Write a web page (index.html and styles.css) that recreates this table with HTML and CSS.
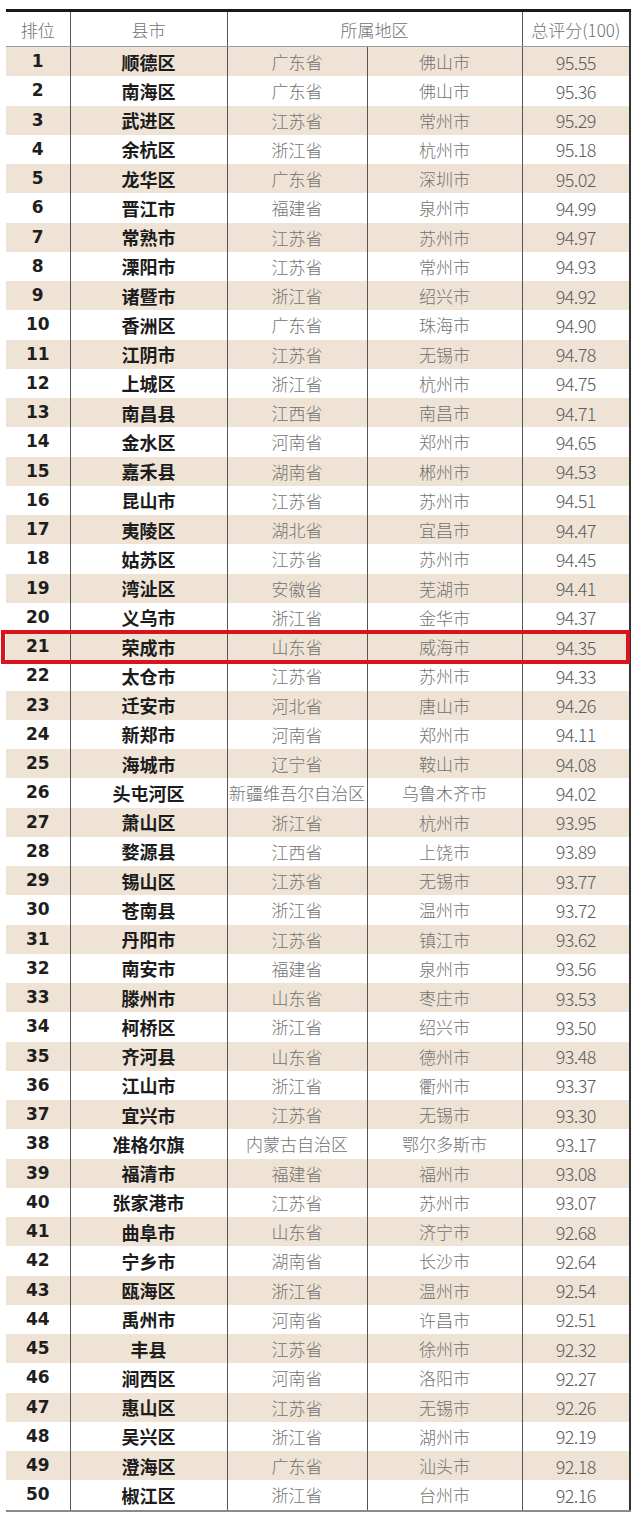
FILE: index.html
```html
<!DOCTYPE html>
<html lang="zh-CN">
<head>
<meta charset="utf-8">
<title>县市排名</title>
<link rel="stylesheet" href="styles.css">
</head>
<body>
<div class="wrap">
<table class="rank-table">
<colgroup>
<col class="c-rank"><col class="c-name"><col class="c-prov"><col class="c-city"><col class="c-score">
</colgroup>
<thead>
<tr><th>排位</th><th>县市</th><th colspan="2">所属地区</th><th>总评分(100)</th></tr>
</thead>
<tbody>
<tr><td class="r">1</td><td class="n">顺德区</td><td class="p">广东省</td><td class="p">佛山市</td><td class="s">95.55</td></tr>
<tr><td class="r">2</td><td class="n">南海区</td><td class="p">广东省</td><td class="p">佛山市</td><td class="s">95.36</td></tr>
<tr><td class="r">3</td><td class="n">武进区</td><td class="p">江苏省</td><td class="p">常州市</td><td class="s">95.29</td></tr>
<tr><td class="r">4</td><td class="n">余杭区</td><td class="p">浙江省</td><td class="p">杭州市</td><td class="s">95.18</td></tr>
<tr><td class="r">5</td><td class="n">龙华区</td><td class="p">广东省</td><td class="p">深圳市</td><td class="s">95.02</td></tr>
<tr><td class="r">6</td><td class="n">晋江市</td><td class="p">福建省</td><td class="p">泉州市</td><td class="s">94.99</td></tr>
<tr><td class="r">7</td><td class="n">常熟市</td><td class="p">江苏省</td><td class="p">苏州市</td><td class="s">94.97</td></tr>
<tr><td class="r">8</td><td class="n">溧阳市</td><td class="p">江苏省</td><td class="p">常州市</td><td class="s">94.93</td></tr>
<tr><td class="r">9</td><td class="n">诸暨市</td><td class="p">浙江省</td><td class="p">绍兴市</td><td class="s">94.92</td></tr>
<tr><td class="r">10</td><td class="n">香洲区</td><td class="p">广东省</td><td class="p">珠海市</td><td class="s">94.90</td></tr>
<tr><td class="r">11</td><td class="n">江阴市</td><td class="p">江苏省</td><td class="p">无锡市</td><td class="s">94.78</td></tr>
<tr><td class="r">12</td><td class="n">上城区</td><td class="p">浙江省</td><td class="p">杭州市</td><td class="s">94.75</td></tr>
<tr><td class="r">13</td><td class="n">南昌县</td><td class="p">江西省</td><td class="p">南昌市</td><td class="s">94.71</td></tr>
<tr><td class="r">14</td><td class="n">金水区</td><td class="p">河南省</td><td class="p">郑州市</td><td class="s">94.65</td></tr>
<tr><td class="r">15</td><td class="n">嘉禾县</td><td class="p">湖南省</td><td class="p">郴州市</td><td class="s">94.53</td></tr>
<tr><td class="r">16</td><td class="n">昆山市</td><td class="p">江苏省</td><td class="p">苏州市</td><td class="s">94.51</td></tr>
<tr><td class="r">17</td><td class="n">夷陵区</td><td class="p">湖北省</td><td class="p">宜昌市</td><td class="s">94.47</td></tr>
<tr><td class="r">18</td><td class="n">姑苏区</td><td class="p">江苏省</td><td class="p">苏州市</td><td class="s">94.45</td></tr>
<tr><td class="r">19</td><td class="n">湾沚区</td><td class="p">安徽省</td><td class="p">芜湖市</td><td class="s">94.41</td></tr>
<tr><td class="r">20</td><td class="n">义乌市</td><td class="p">浙江省</td><td class="p">金华市</td><td class="s">94.37</td></tr>
<tr><td class="r">21</td><td class="n">荣成市</td><td class="p">山东省</td><td class="p">威海市</td><td class="s">94.35</td></tr>
<tr><td class="r">22</td><td class="n">太仓市</td><td class="p">江苏省</td><td class="p">苏州市</td><td class="s">94.33</td></tr>
<tr><td class="r">23</td><td class="n">迁安市</td><td class="p">河北省</td><td class="p">唐山市</td><td class="s">94.26</td></tr>
<tr><td class="r">24</td><td class="n">新郑市</td><td class="p">河南省</td><td class="p">郑州市</td><td class="s">94.11</td></tr>
<tr><td class="r">25</td><td class="n">海城市</td><td class="p">辽宁省</td><td class="p">鞍山市</td><td class="s">94.08</td></tr>
<tr><td class="r">26</td><td class="n">头屯河区</td><td class="p">新疆维吾尔自治区</td><td class="p">乌鲁木齐市</td><td class="s">94.02</td></tr>
<tr><td class="r">27</td><td class="n">萧山区</td><td class="p">浙江省</td><td class="p">杭州市</td><td class="s">93.95</td></tr>
<tr><td class="r">28</td><td class="n">婺源县</td><td class="p">江西省</td><td class="p">上饶市</td><td class="s">93.89</td></tr>
<tr><td class="r">29</td><td class="n">锡山区</td><td class="p">江苏省</td><td class="p">无锡市</td><td class="s">93.77</td></tr>
<tr><td class="r">30</td><td class="n">苍南县</td><td class="p">浙江省</td><td class="p">温州市</td><td class="s">93.72</td></tr>
<tr><td class="r">31</td><td class="n">丹阳市</td><td class="p">江苏省</td><td class="p">镇江市</td><td class="s">93.62</td></tr>
<tr><td class="r">32</td><td class="n">南安市</td><td class="p">福建省</td><td class="p">泉州市</td><td class="s">93.56</td></tr>
<tr><td class="r">33</td><td class="n">滕州市</td><td class="p">山东省</td><td class="p">枣庄市</td><td class="s">93.53</td></tr>
<tr><td class="r">34</td><td class="n">柯桥区</td><td class="p">浙江省</td><td class="p">绍兴市</td><td class="s">93.50</td></tr>
<tr><td class="r">35</td><td class="n">齐河县</td><td class="p">山东省</td><td class="p">德州市</td><td class="s">93.48</td></tr>
<tr><td class="r">36</td><td class="n">江山市</td><td class="p">浙江省</td><td class="p">衢州市</td><td class="s">93.37</td></tr>
<tr><td class="r">37</td><td class="n">宜兴市</td><td class="p">江苏省</td><td class="p">无锡市</td><td class="s">93.30</td></tr>
<tr><td class="r">38</td><td class="n">准格尔旗</td><td class="p">内蒙古自治区</td><td class="p">鄂尔多斯市</td><td class="s">93.17</td></tr>
<tr><td class="r">39</td><td class="n">福清市</td><td class="p">福建省</td><td class="p">福州市</td><td class="s">93.08</td></tr>
<tr><td class="r">40</td><td class="n">张家港市</td><td class="p">江苏省</td><td class="p">苏州市</td><td class="s">93.07</td></tr>
<tr><td class="r">41</td><td class="n">曲阜市</td><td class="p">山东省</td><td class="p">济宁市</td><td class="s">92.68</td></tr>
<tr><td class="r">42</td><td class="n">宁乡市</td><td class="p">湖南省</td><td class="p">长沙市</td><td class="s">92.64</td></tr>
<tr><td class="r">43</td><td class="n">瓯海区</td><td class="p">浙江省</td><td class="p">温州市</td><td class="s">92.54</td></tr>
<tr><td class="r">44</td><td class="n">禹州市</td><td class="p">河南省</td><td class="p">许昌市</td><td class="s">92.51</td></tr>
<tr><td class="r">45</td><td class="n">丰县</td><td class="p">江苏省</td><td class="p">徐州市</td><td class="s">92.32</td></tr>
<tr><td class="r">46</td><td class="n">涧西区</td><td class="p">河南省</td><td class="p">洛阳市</td><td class="s">92.27</td></tr>
<tr><td class="r">47</td><td class="n">惠山区</td><td class="p">江苏省</td><td class="p">无锡市</td><td class="s">92.26</td></tr>
<tr><td class="r">48</td><td class="n">吴兴区</td><td class="p">浙江省</td><td class="p">湖州市</td><td class="s">92.19</td></tr>
<tr><td class="r">49</td><td class="n">澄海区</td><td class="p">广东省</td><td class="p">汕头市</td><td class="s">92.18</td></tr>
<tr><td class="r">50</td><td class="n">椒江区</td><td class="p">浙江省</td><td class="p">台州市</td><td class="s">92.16</td></tr>
</tbody>
</table>
<div class="highlight"></div>
</div>
</body>
</html>
```
FILE: styles.css
```css
html, body {
  margin: 0;
  padding: 0;
  background: #ffffff;
}
.wrap {
  position: relative;
  padding: 9px 10px 0 6px;
}
.rank-table {
  width: 624px;
  border-collapse: collapse;
  table-layout: fixed;
  font-family: "Noto Sans CJK SC", "Noto Sans", sans-serif;
  border-top: 3px solid #1a1a1a;
  border-bottom: 2px solid #8a8a8a;
  border-right: 2px solid #333;
}
.c-rank { width: 64px; }
.c-name { width: 157px; }
.c-prov { width: 140px; }
.c-city { width: 155px; }
.c-score { width: 108px; }
.rank-table th {
  height: 34px;
  padding: 0;
  font-weight: 300;
  font-size: 17px;
  color: #707070;
  text-align: center;
  border-bottom: 1px solid #9a9a9a;
  border-left: 1px solid #555;
}
.rank-table th:first-child { border-left: none; }
.rank-table td {
  height: 29.26px;
  padding: 0;
  text-align: center;
  border-left: 1px solid #555;
  line-height: 1;
}
.rank-table td:first-child { border-left: none; }
.rank-table tbody tr:nth-child(odd) { background: #efe3d5; }
.r {
  font-family: "DejaVu Sans", sans-serif;
  font-weight: 700;
  font-size: 17px;
  color: #1e1e1e;
}
.n {
  font-weight: 700;
  font-size: 18px;
  color: #1c1c1c;
}
.p {
  font-weight: 300;
  font-size: 17px;
  color: #727272;
}
.s {
  font-weight: 300;
  font-size: 18px;
  letter-spacing: -0.6px;
  color: #5e5e5e;
}
.highlight {
  position: absolute;
  left: 1px;
  top: 630px;
  width: 621px;
  height: 26px;
  border: 4px solid #d8151c;
  pointer-events: none;
}
```
